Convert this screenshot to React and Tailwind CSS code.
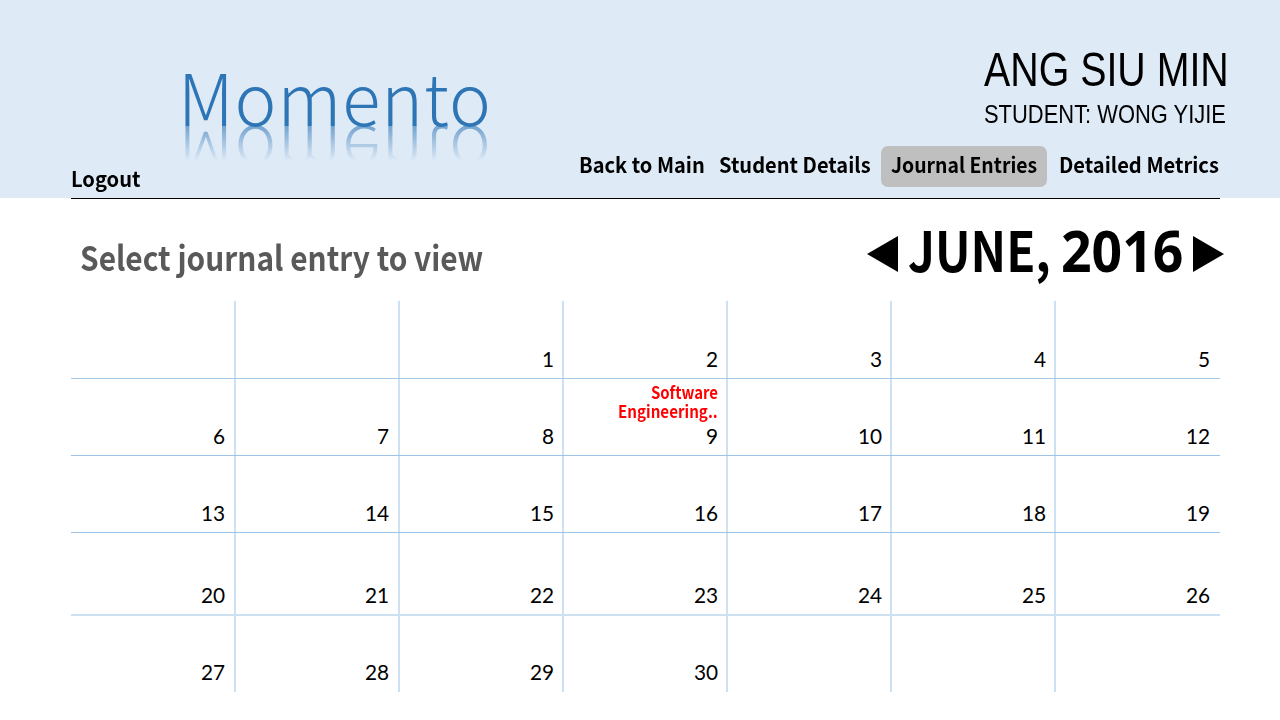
import { useLayoutEffect, useRef, useState } from "react";

// Condenses or widens a line of text to the width of its box.
function FitText({ children, className = "", inner = "" }) {
  const box = useRef(null);
  const text = useRef(null);
  const [scale, setScale] = useState(1);
  useLayoutEffect(() => {
    setScale(box.current.clientWidth / text.current.offsetWidth);
  }, [children]);
  return (
    <div ref={box} className={`whitespace-nowrap ${className}`}>
      <span
        ref={text}
        className={`inline-block origin-left ${inner}`}
        style={{ transform: `scaleX(${scale})` }}
      >
        {children}
      </span>
    </div>
  );
}

function Logo() {
  const type =
    "h-20 w-[314px] text-[71.5px] leading-[80px] font-light text-[#2e75b6] font-['Noto_Sans_CJK_SC',sans-serif]";
  return (
    <div className="relative ml-[107px] h-20 w-[314px]">
      <FitText className={type} inner="tracking-[1px]">Momento</FitText>
      <div
        aria-hidden="true"
        className="absolute left-0 top-[71px] h-[35px] w-[314px] overflow-hidden opacity-60 [mask-image:linear-gradient(to_bottom,black,transparent)]"
      >
        <div className="-mt-[9px] -scale-y-100">
          <FitText className={type} inner="tracking-[1px]">Momento</FitText>
        </div>
      </div>
    </div>
  );
}

function NavItem({ label, width, active = false }) {
  return (
    <a className={`flex h-[41px] justify-center rounded-[7px] pt-[6px] ${active ? "w-[166px] bg-[#bfbfbf]" : ""}`}>
      <FitText className={`h-6 ${width}`}>{label}</FitText>
    </a>
  );
}

const weeks = [
  { days: ["", "", 1, 2, 3, 4, 5], row: "h-[78px] border-b border-[#a5c8e8]", cell: "pb-[7px]" },
  { days: [6, 7, 8, 9, 10, 11, 12], row: "h-[77px] border-b border-[#9dc3e6]", cell: "pb-[7px]" },
  { days: [13, 14, 15, 16, 17, 18, 19], row: "h-[77px] border-b border-[#9dc3e6]", cell: "pb-[7px]" },
  { days: [20, 21, 22, 23, 24, 25, 26], row: "h-[83px] border-b-2 border-[#cde1f2]", cell: "pb-[7px]" },
  { days: [27, 28, 29, 30, "", "", ""], row: "h-[76px]", cell: "pb-2" },
];

const columns = [
  "border-r-2 border-[#cde1f2] pr-[9px]",
  "border-r-2 border-[#cde1f2] pr-[9px]",
  "border-r-2 border-[#cde1f2] pr-2",
  "border-r-2 border-[#cde1f2] pr-2",
  "border-r-2 border-[#cde1f2] pr-2",
  "border-r-2 border-[#cde1f2] pr-2",
  "pr-[10px]",
];

function Calendar() {
  return (
    <div className="ml-[71px] mt-[18px] w-[1149px] font-['Lato',sans-serif] text-[20.8px] leading-6 text-black">
      {weeks.map(({ days, row, cell }, w) => (
        <div key={w} className={`grid grid-cols-[165px_repeat(6,164px)] ${row}`}>
          {days.map((day, d) => (
            <div key={d} className={`flex flex-col items-end justify-end ${cell} ${columns[d]}`}>
              {day === 9 && (
                <div className="mb-[3px] flex flex-col items-end text-[16.5px] leading-[19px] font-bold text-[#ff0000] font-['Noto_Sans_CJK_SC',sans-serif]">
                  <FitText className="h-[19px] w-[67px]">Software</FitText>
                  <FitText className="h-[19px] w-[100px]">Engineering..</FitText>
                </div>
              )}
              <span className="h-6">{day}</span>
            </div>
          ))}
        </div>
      ))}
    </div>
  );
}

export default function App() {
  return (
    <div className="h-[720px] w-[1280px] overflow-hidden bg-white text-black">
      <header className="flex h-[198px] justify-between bg-[#deeaf6] pl-[71px] pr-[52px]">
        <div className="pt-[55px]">
          <Logo />
          <a className="mt-[31px] block text-[21px] leading-6 font-bold font-['Noto_Sans_CJK_SC',sans-serif]">
            <FitText className="h-6 w-[69px]">Logout</FitText>
          </a>
        </div>
        <div className="flex flex-col items-end pt-[42px] font-['Liberation_Sans',sans-serif]">
          <FitText className="mr-[-1px] h-14 w-[245px] text-[48px] leading-[56px]">ANG SIU MIN</FitText>
          <FitText className="mr-[2px] mt-px h-[30px] w-[242px] text-[26px] leading-[30px]">
            STUDENT: WONG YIJIE
          </FitText>
          <nav className="mr-[9px] mt-[17px] flex text-[21px] leading-6 font-bold font-['Noto_Sans_CJK_SC',sans-serif]">
            <NavItem label="Back to Main" width="mr-[14px] w-[126px]" />
            <NavItem label="Student Details" width="mr-[10px] w-[152px]" />
            <NavItem label="Journal Entries" width="w-[146px]" active />
            <NavItem label="Detailed Metrics" width="ml-[12px] w-[160px]" />
          </nav>
        </div>
      </header>
      <hr className="ml-[71px] h-px w-[1149px] border-0 bg-black" />
      <div className="flex h-[84px] justify-between pl-[80px] pr-[56px]">
        <h1 className="pt-[36px] text-[34px] leading-[44px] font-bold text-[#595959] font-['Noto_Sans_CJK_SC',sans-serif]">
          <FitText className="h-11 w-[403px]">Select journal entry to view</FitText>
        </h1>
        <div className="flex">
          <svg className="mt-[37px] h-9 w-[31px]" viewBox="0 0 31 36">
            <path d="M0 18L31 0V36Z" />
          </svg>
          <div className="ml-[10px] mr-[10px] flex w-[275px] justify-between font-bold leading-[72px]">
            <FitText className="h-[72px] w-[143px] pt-[13px] text-[55.5px] font-['Noto_Sans_CJK_SC',sans-serif]">
              JUNE,
            </FitText>
            <FitText className="h-[72px] w-[122px] pt-[15px] text-[57px] font-['Noto_Sans',sans-serif]">
              2016
            </FitText>
          </div>
          <svg className="mt-[37px] h-9 w-[31px]" viewBox="0 0 31 36">
            <path d="M31 18L0 0V36Z" />
          </svg>
        </div>
      </div>
      <Calendar />
    </div>
  );
}
